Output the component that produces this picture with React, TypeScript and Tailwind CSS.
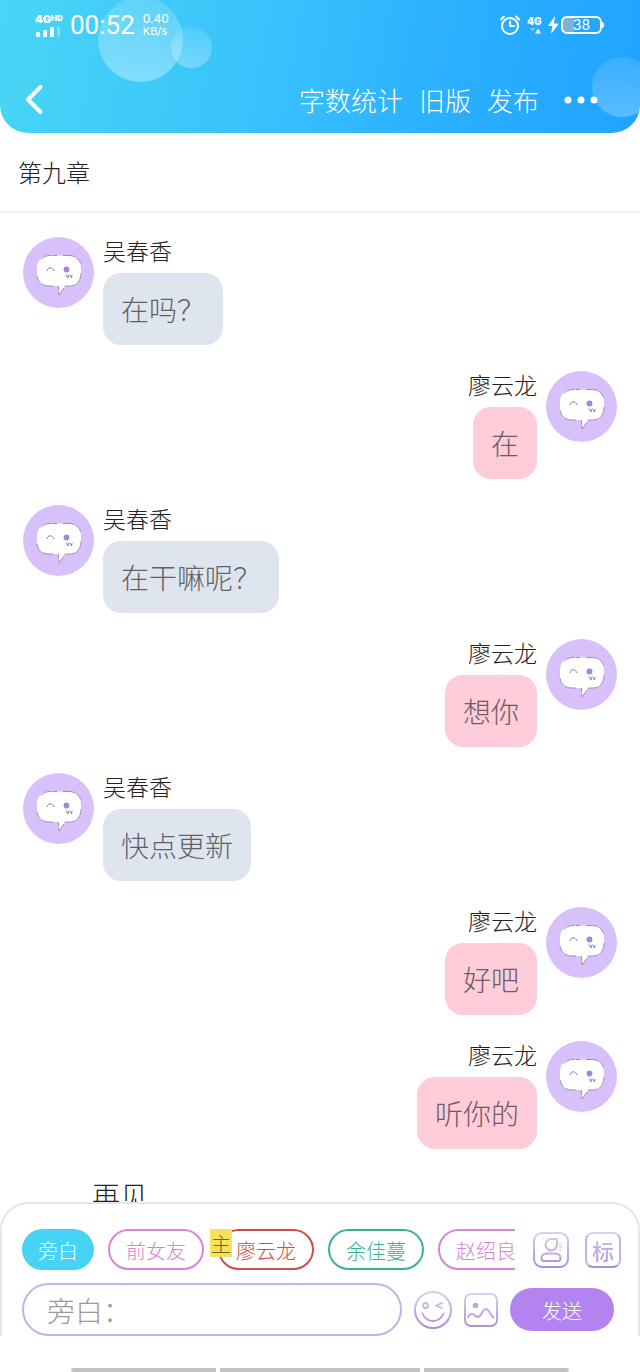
import { useState } from "react";
import clsx from "clsx";

type Message = {
  id: number;
  side: "left" | "right";
  name: string;
  text: string;
};

const messages: Message[] = [
  { id: 1, side: "left", name: "吴春香", text: "在吗？" },
  { id: 2, side: "right", name: "廖云龙", text: "在" },
  { id: 3, side: "left", name: "吴春香", text: "在干嘛呢？" },
  { id: 4, side: "right", name: "廖云龙", text: "想你" },
  { id: 5, side: "left", name: "吴春香", text: "快点更新" },
  { id: 6, side: "right", name: "廖云龙", text: "好吧" },
  { id: 7, side: "right", name: "廖云龙", text: "听你的" },
];

const roles = [
  { name: "前女友", style: "border-[#d983d6] text-[#d983d6]" },
  { name: "廖云龙", style: "border-[#cb4f47] text-[#cb4f47]", lead: true },
  { name: "余佳蔓", style: "border-[#3bb296] text-[#3bb296]" },
  { name: "赵绍良", style: "border-[#d983d6] text-[#d983d6]" },
];

function StatusBar() {
  return (
    <div className="flex h-[50px] items-center justify-between pl-[35px] pr-9 font-['Inter','Roboto',sans-serif] font-normal">
      <div className="flex items-center">
        <div className="w-7">
          <div className="flex items-start text-[11px] font-black leading-[11px]">
            4G<span className="text-[8px] leading-[8px]">HD</span>
          </div>
          <svg className="mt-px h-[11px] w-[26px]" viewBox="0 0 26 11" fill="#fff">
            <rect x="1" y="6" width="4" height="5" rx="1" />
            <rect x="8" y="4" width="4" height="7" rx="1" />
            <rect x="15" y="1" width="4" height="10" rx="1" />
            <rect x="22" y="0" width="3" height="11" rx="1" opacity="0.3" />
          </svg>
        </div>
        <span className="ml-[7px] font-['Roboto',sans-serif] text-[26px] leading-7">00:52</span>
        <span className="ml-2 text-[12px] leading-3">
          <span className="block">0.40</span>
          <span className="block text-[11px]">KB/s</span>
        </span>
      </div>
      <div className="flex items-center">
        <svg className="h-5 w-[22px]" viewBox="0 0 22 20" fill="none" stroke="#fff" strokeWidth="2" strokeLinecap="round">
          <circle cx="11" cy="11" r="8" />
          <path d="M11 6.500V11h4M2 4.500 5 1.500M20 4.500 17 1.500" />
        </svg>
        <div className="ml-[6px] w-4">
          <div className="text-[10px] font-black leading-[11px]">4G</div>
          <svg className="h-[7px] w-4" viewBox="0 0 16 7" fill="#fff">
            <path d="M3 1h5L5.500 5Z" opacity="0.35" />
            <path d="M8 6.500h6L11 1.500Z" />
          </svg>
        </div>
        <svg className="ml-1 h-[18px] w-3" viewBox="0 0 12 18" fill="#fff">
          <path d="M8 0 1 10h4.500L4 18l8-10.500H7Z" />
        </svg>
        <div className="ml-[2px] flex h-[18px] w-[41px] items-center justify-center rounded-md border-2 border-white bg-linear-to-r from-[#7fb0d8] from-30% to-transparent to-30% text-[14px] leading-none">
          38
        </div>
        <div className="h-[6px] w-[2px] rounded-r bg-white" />
      </div>
    </div>
  );
}

function Header() {
  return (
    <header className="relative shrink-0 overflow-hidden rounded-b-[28px] bg-linear-[100deg,#48d6f6_0%,#37c0fc_45%,#2bafff_70%,#20a4ff_100%] text-white">
      {/* Floating bubbles */}
      <div className="absolute -top-[3px] left-[98px] size-[85px] rounded-full bg-linear-to-b from-white/15 to-white/35" />
      <div className="absolute left-[171px] top-[27px] size-[41px] rounded-full bg-linear-to-b from-white/10 to-white/30" />
      <div className="absolute -right-3 top-[57px] size-[60px] rounded-full bg-linear-to-b from-white/10 to-white/25" />

      <div className="relative">
        <StatusBar />
        <nav className="flex h-[83px] items-center gap-4 pl-[25px] pr-[42px] pt-4 text-[26px] leading-8">
          <button type="button" aria-label="返回" className="mr-auto">
            <svg className="h-[31px] w-[19px]" viewBox="0 0 19 31" fill="none" stroke="#fff" strokeWidth="4" strokeLinecap="round" strokeLinejoin="round">
              <path d="M15.500 3 3 15.500 15.500 28" />
            </svg>
          </button>
          <button type="button">字数统计</button>
          <button type="button">旧版</button>
          <button type="button">发布</button>
          <button type="button" aria-label="更多" className="ml-[9px]">
            <svg className="h-2 w-[34px]" viewBox="0 0 34 8" fill="#fff">
              <circle cx="4" cy="4" r="3.500" />
              <circle cx="17" cy="4" r="3.500" />
              <circle cx="30" cy="4" r="3.500" />
            </svg>
          </button>
        </nav>
      </div>
    </header>
  );
}

function Avatar() {
  return (
    <svg className="size-[71px] shrink-0" viewBox="0 0 71 71" fill="none" aria-hidden="true">
      <circle cx="35.500" cy="35.500" r="35.500" fill="#d8c0fb" />
      <path
        d="M27 18.500h18c8.500 0 13 5 13 13v5c0 8-4.500 12.500-11 12.500h-4.500L36 58l-.5-9H26c-7.500 0-12-4.500-12-12.500v-5c0-8 4.500-13 13-13Z"
        fill="#fff"
      />
      <path
        d="M18 22.500c2-2.500 5-4 9-4h7M40 18.500h6c6 0 10 3 11.500 8M58 36c0 8-4.500 13-11 13h-4.500L36 58l-.5-9M30 49h-4c-7 0-11-4-12-10"
        stroke="#9a83ab"
        strokeWidth="0.900"
        strokeDasharray="12 1"
      />
      <path d="M24 34c.5-4 5.500-4.500 7 0" stroke="#8d7c9c" strokeWidth="1" />
      <circle cx="43.500" cy="32.500" r="2.900" fill="#a584dc" />
      <path d="m43 37.500 2 3.500.5-3M46.500 37.500l2 3.500.5-3" stroke="#8b7699" strokeWidth="0.900" />
    </svg>
  );
}

function MessageRow({ message }: { message: Message }) {
  const right = message.side === "right";
  return (
    <li className={clsx("flex items-start gap-[9px]", right && "flex-row-reverse")}>
      <Avatar />
      <div className={clsx("flex flex-col", right ? "items-end" : "items-start")}>
        <span className="h-9 text-[23px] leading-[26px] text-[#222]">{message.name}</span>
        <p
          className={clsx(
            "rounded-[18px] px-[18px] py-4 text-[28px] leading-10",
            right ? "bg-[#fecdd9] text-[#6f5a62]" : "bg-[#dfe5ee] text-[#5f6268]",
          )}
        >
          {message.text}
        </p>
      </div>
    </li>
  );
}

function IconGradient({ id }: { id: string }) {
  return (
    <defs>
      <linearGradient id={id} x1="0" y1="0" x2="0" y2="36" gradientUnits="userSpaceOnUse">
        <stop offset="0" stopColor="#dccff3" />
        <stop offset="1" stopColor="#ae8cda" />
      </linearGradient>
    </defs>
  );
}

function Composer() {
  const [draft, setDraft] = useState("");

  return (
    <form
      className="flex shrink-0 flex-col gap-[13px] rounded-t-[28px] border-2 border-b-0 border-[#e6e6e9] bg-white pl-5 pt-[25px]"
      onSubmit={(e) => e.preventDefault()}
    >
      {/* Role picker */}
      <div className="flex items-center pr-[17px]">
        <div className="flex min-w-0 flex-1 gap-[14px] overflow-hidden text-[20px] leading-none">
          <button type="button" className="h-[41px] shrink-0 rounded-full bg-[#46d3f5] px-4 pt-[2px] text-white">
            旁白
          </button>
          {roles.map((role) => (
            <button
              key={role.name}
              type="button"
              className={clsx("relative h-[41px] shrink-0 rounded-full border-2 px-4 pt-[2px]", role.style)}
            >
              {role.name}
              {role.lead && (
                <span className="absolute -left-[10px] -top-[2px] flex h-7 w-[22px] items-center justify-center bg-[#f5e25c] pt-[2px] text-[#6d6420]">
                  主
                </span>
              )}
            </button>
          ))}
        </div>
        <button type="button" aria-label="角色" className="ml-[18px] shrink-0">
          <svg className="size-9" viewBox="0 0 36 36" fill="none" stroke="url(#role)" strokeWidth="2" strokeLinejoin="round">
            <IconGradient id="role" />
            <rect x="1" y="1" width="34" height="34" rx="8" />
            <path d="M18.500 7H24v5.500a5.700 5.700 0 1 1-5.500-5.500Z" />
            <path d="M13.500 21.500h9c3 0 5 2 5 4.500 0 2-1 3-2.500 3H11c-1.500 0-2.500-1-2.500-3 0-2.500 2-4.500 5-4.500Z" />
            <path d="M26 12h2.500M26 15h3.500M26 18h2.500" strokeWidth="1.200" />
          </svg>
        </button>
        <button
          type="button"
          className="ml-4 size-9 shrink-0 rounded-lg border-2 border-b-[#ae8cda] border-l-[#c7b1e8] border-r-[#c7b1e8] border-t-[#dccff3] text-[22px] font-medium leading-none"
        >
          <span className="bg-linear-to-b from-[#d3c2f0] to-[#b596de] bg-clip-text text-transparent">标</span>
        </button>
      </div>

      {/* Input row */}
      <div className="flex items-center gap-3 pr-6">
        <input
          type="text"
          aria-label="旁白"
          placeholder="旁白："
          value={draft}
          onChange={(e) => setDraft(e.target.value)}
          className="h-[53px] min-w-0 flex-1 rounded-full border-2 border-[#c9b0e6] px-[23px] text-[28px] outline-none placeholder:text-[#999]"
        />
        <button type="button" aria-label="表情" className="shrink-0">
          <svg className="size-[38px]" viewBox="0 0 38 38" fill="none" stroke="url(#smile)" strokeWidth="2" strokeLinecap="round">
            <IconGradient id="smile" />
            <circle cx="19" cy="19" r="18" />
            <circle cx="11.500" cy="14.500" r="2.500" strokeWidth="1.800" />
            <path d="m28 12-5.500 2.500 5.500 2.500" strokeWidth="1.800" />
            <path d="M8.500 22.500c4 10 17 10 21 0" />
          </svg>
        </button>
        <button type="button" aria-label="图片" className="shrink-0">
          <svg className="size-[34px]" viewBox="0 0 34 34" fill="none" stroke="url(#photo)" strokeWidth="2" strokeLinecap="round">
            <IconGradient id="photo" />
            <rect x="1" y="1" width="32" height="32" rx="6" />
            <circle cx="11.500" cy="12.500" r="2.800" fill="#bda2ec" stroke="none" />
            <path d="M4 24c2-3.500 4.500-4 7-1.500 2.500 2.500 5 1.500 6.500-2 3-6 6-5.500 8.500-.5 1 2 2 3 3.500 4.500" />
          </svg>
        </button>
        <button type="submit" className="h-[43px] w-[104px] shrink-0 rounded-full bg-[#b383f0] pt-[2px] text-[20px] leading-none text-white">
          发送
        </button>
      </div>
    </form>
  );
}

export default function App() {
  return (
    <div className="flex h-screen flex-col bg-white font-['Noto_Sans_CJK_SC',sans-serif] font-light">
      <Header />
      <h1 className="shrink-0 border-b-2 border-[#f3f3f4] px-[18px] py-[22px] text-[24px] leading-[34px] text-[#222]">
        第九章
      </h1>
      <main className="min-h-0 flex-1 overflow-y-auto [scrollbar-width:none]">
        <ul className="flex flex-col gap-[26px] px-[23px] pt-6">
          {messages.map((m) => (
            <MessageRow key={m.id} message={m} />
          ))}
          <li className="pl-[69px] text-[28px] leading-10 text-[#222]">再见</li>
        </ul>
      </main>
      <Composer />

      {/* Gesture bar */}
      <div className="flex h-9 shrink-0 items-end gap-1 px-[71px]">
        <div className="h-1 flex-[145] rounded-l bg-[#c2c2c2]" />
        <div className="h-1 flex-[201] bg-[#c2c2c2]" />
        <div className="h-1 flex-[145] rounded-r bg-[#c2c2c2]" />
      </div>
    </div>
  );
}
